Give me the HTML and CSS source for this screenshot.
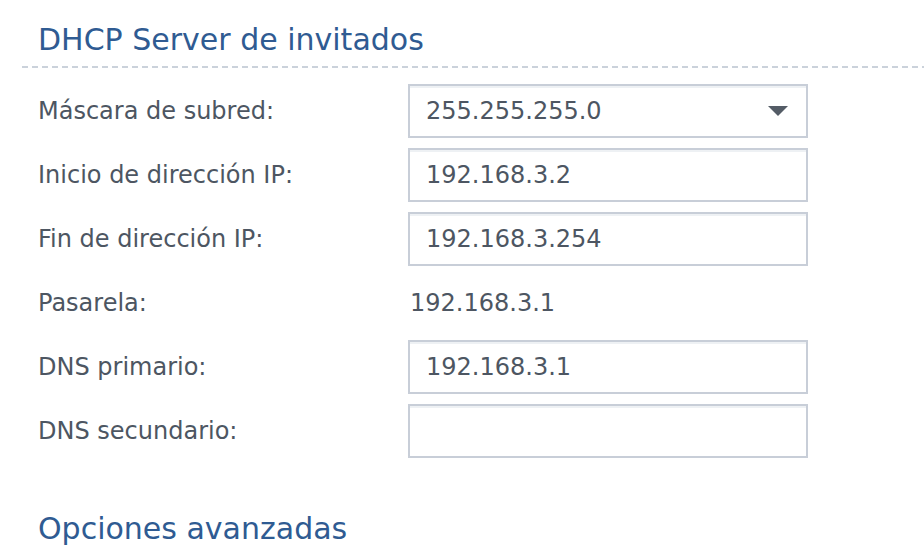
FILE: index.html
```html
<!DOCTYPE html>
<html lang="es">
<head>
  <meta charset="UTF-8" />
  <title>DHCP Server de invitados</title>
  <link rel="stylesheet" href="styles.css">
</head>
<body>

<div class="panel">
  <h2 class="section-title">DHCP Server de invitados</h2>
  <div class="divider"></div>

  <div class="form">
    <label class="label">Máscara de subred:</label>
    <div class="field select">
      <span>255.255.255.0</span>
      <svg class="arrow" width="20" height="10" viewBox="0 0 20 10"><path d="M0 0H20L10 10Z" fill="#545c66"/></svg>
    </div>

    <label class="label">Inicio de dirección IP:</label>
    <input class="field" type="text" value="192.168.3.2">

    <label class="label">Fin de dirección IP:</label>
    <input class="field" type="text" value="192.168.3.254">

    <label class="label">Pasarela:</label>
    <div class="static">192.168.3.1</div>

    <label class="label">DNS primario:</label>
    <input class="field" type="text" value="192.168.3.1">

    <label class="label">DNS secundario:</label>
    <input class="field" type="text" value="">
  </div>

  <h2 class="section-title next">Opciones avanzadas</h2>
</div>

</body>
</html>
```

FILE: styles.css
```css
body {
    margin: 0;
    background-color: #ffffff;
    font-family: "DejaVu Sans", Verdana, sans-serif;
    color: #4d5662;
}

.panel {
    padding: 23px 0 0 22px;
}

.section-title {
    margin: 0 0 9px 16px;
    font-size: 30px;
    line-height: 34px;
    font-weight: normal;
    color: #2f5b92;
}

.section-title.next {
    margin-top: 54px;
}

.divider {
    height: 2px;
    background-image: repeating-linear-gradient(90deg, #cbd2db 0, #cbd2db 6px, transparent 6px, transparent 10px);
}

.form {
    display: grid;
    grid-template-columns: 370px 400px;
    grid-auto-rows: 54px;
    row-gap: 10px;
    margin: 16px 0 0 16px;
    align-items: center;
}

.label {
    font-size: 24px;
}

.field {
    box-sizing: border-box;
    height: 54px;
    width: 400px;
    margin: 0;
    padding: 0 16px;
    border: 2px solid #c8ced8;
    border-radius: 0;
    box-shadow: inset 0 2px 0 #eef1f4;
    background: #ffffff;
    font-family: "DejaVu Sans", Verdana, sans-serif;
    font-size: 24px;
    color: #4d5662;
    outline: none;
}

.select {
    display: flex;
    align-items: center;
    justify-content: space-between;
}

.select .arrow {
    margin-right: 2px;
}

.static {
    padding-left: 2px;
    font-size: 24px;
}
```
